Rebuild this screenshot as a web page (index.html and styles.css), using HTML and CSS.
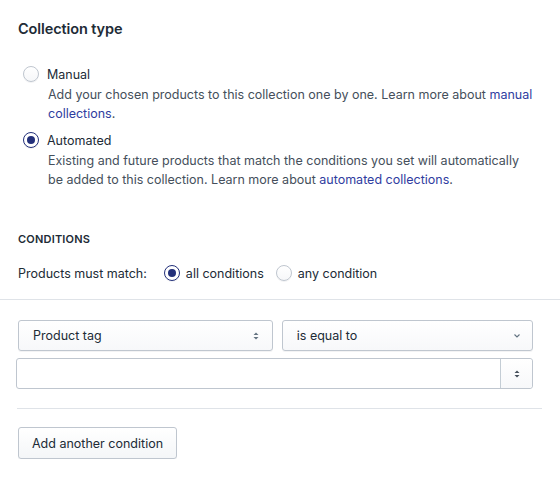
FILE: index.html
```html
<!DOCTYPE html>
<html>
<head>
<meta charset="utf-8">
<link rel="stylesheet" href="styles.css">
</head>
<body>
<div class="card">
  <section class="type">
    <h2 class="heading">Collection type</h2>
    <div class="choice">
      <div class="choice-row"><span class="radio"></span><span class="label">Manual</span></div>
      <p class="help">Add your chosen products to this collection one by one. Learn more about <a href="#">manual collections</a>.</p>
    </div>
    <div class="choice choice-2">
      <div class="choice-row"><span class="radio checked"></span><span class="label">Automated</span></div>
      <p class="help">Existing and future products that match the conditions you set will automatically be added to this collection. Learn more about <a href="#">automated collections</a>.</p>
    </div>
  </section>
  <section class="conditions">
    <h3 class="subheading">CONDITIONS</h3>
    <div class="match">
      <span class="match-label">Products must match:</span>
      <span class="choice-row"><span class="radio checked"></span><span class="label">all conditions</span></span>
      <span class="choice-row"><span class="radio"></span><span class="label">any condition</span></span>
    </div>
  </section>
  <section class="rules">
    <div class="selects">
      <div class="select select-a">
        <span>Product tag</span>
        <svg class="updown" width="8" height="10" viewBox="0 0 8 10"><path d="M4 1.5 L6.5 4 H1.5 Z M4 8.5 L1.5 6 H6.5 Z" fill="#637381"/></svg>
      </div>
      <div class="select select-b">
        <span>is equal to</span>
        <svg class="chev" width="8" height="6" viewBox="0 0 8 6"><path d="M1.5 1.5 L4 4 L6.5 1.5" fill="none" stroke="#637381" stroke-width="1.1"/></svg>
      </div>
    </div>
    <div class="input">
      <div class="input-field"></div>
      <div class="stepper">
        <svg width="8" height="10" viewBox="0 0 8 10"><path d="M4 1.5 L6.5 4 H1.5 Z M4 8.5 L1.5 6 H6.5 Z" fill="#454f5b"/></svg>
      </div>
    </div>
    <hr class="rule-divider">
    <button class="btn">Add another condition</button>
  </section>
</div>
</body>
</html>
```
FILE: styles.css
```css
html, body {
  margin: 0;
  padding: 0;
  background: #ffffff;
}
body {
  font-family: Inter, "Noto Sans", sans-serif;
  color: #212b36;
  font-size: 12.5px;
  -webkit-font-smoothing: antialiased;
}
.card {
  width: 560px;
}
.type {
  padding: 19px 18px 0 18px;
}
.heading {
  margin: 0;
  font-size: 14.5px;
  line-height: 20px;
  font-weight: 600;
  letter-spacing: -0.1px;
}
.choice {
  margin-top: 25px;
}
.choice-2 {
  margin-top: 7px;
}
.choice-row {
  display: flex;
  align-items: center;
  height: 20px;
}
.radio {
  width: 16px;
  height: 16px;
  box-sizing: border-box;
  border-radius: 50%;
  border: 1px solid #bfc6cf;
  background: linear-gradient(#ffffff, #f6f7f9);
  box-shadow: 0 1px 0 rgba(22,29,37,0.05);
  margin-left: 5px;
  margin-right: 8px;
  position: relative;
  flex: none;
}
.radio.checked {
  border: 1.5px solid #23307a;
  background: #ffffff;
}
.radio.checked::after {
  content: "";
  position: absolute;
  left: 50%;
  top: 50%;
  width: 8px;
  height: 8px;
  margin: -4px 0 0 -4px;
  border-radius: 50%;
  background: #23307a;
}
.label {
  font-size: 12.5px;
  color: #212b36;
}
.help {
  margin: 2px 0 0 30px;
  font-size: 12.5px;
  line-height: 18.5px;
  color: #454f5b;
  max-width: 486px;
}
.help a {
  color: #2f3da0;
  text-decoration: none;
}
.conditions {
  padding: 42px 18px 16px 18px;
  border-bottom: 1px solid #dfe3e8;
}
.subheading {
  margin: 0;
  font-size: 11px;
  line-height: 16px;
  font-weight: 600;
  letter-spacing: 0.2px;
}
.match {
  display: flex;
  align-items: center;
  margin-top: 16px;
  height: 20px;
}
.match-label {
  margin-right: 17px;
  color: #212b36;
}
.match .radio {
  margin-left: 0;
  margin-right: 6px;
}
.match .choice-row + .choice-row {
  margin-left: 12px;
}
.rules {
  padding: 20px 27px 0 16px;
}
.selects {
  display: flex;
  gap: 9px;
  margin-left: 2px;
}
.select {
  height: 31px;
  box-sizing: border-box;
  border: 1px solid #bfc6cf;
  border-radius: 3px;
  background: linear-gradient(#ffffff, #f7f8fa);
  box-shadow: 0 1px 0 rgba(22,29,37,0.05);
  display: flex;
  align-items: center;
  justify-content: space-between;
  padding: 0 11px 0 14px;
  font-size: 12.5px;
  color: #212b36;
}
.select-a {
  flex: 255 1 0;
}
.select-b {
  flex: 251 1 0;
}
.select .updown {
  margin-right: 1px;
}
.input {
  display: flex;
  margin-top: 7px;
  height: 31px;
  box-sizing: border-box;
  border: 1px solid #bfc6cf;
  border-radius: 3px;
  background: #ffffff;
}
.input-field {
  flex: 1;
}
.stepper {
  width: 31px;
  border-left: 1px solid #c4cdd5;
  display: flex;
  align-items: center;
  justify-content: center;
  background: linear-gradient(#ffffff, #f7f8fa);
  border-radius: 0 3px 3px 0;
}
.rule-divider {
  border: none;
  border-top: 1px solid #dfe3e8;
  margin: 19px -9px 0 1px;
}
.btn {
  display: block;
  margin: 18px 0 0 2px;
  height: 32px;
  padding: 0 13px;
  font-family: Inter, "Noto Sans", sans-serif;
  font-size: 12.5px;
  color: #212b36;
  border: 1px solid #bfc6cf;
  border-radius: 3px;
  background: linear-gradient(#ffffff, #f4f6f8);
  box-shadow: 0 1px 0 rgba(22,29,37,0.05);
}
```
